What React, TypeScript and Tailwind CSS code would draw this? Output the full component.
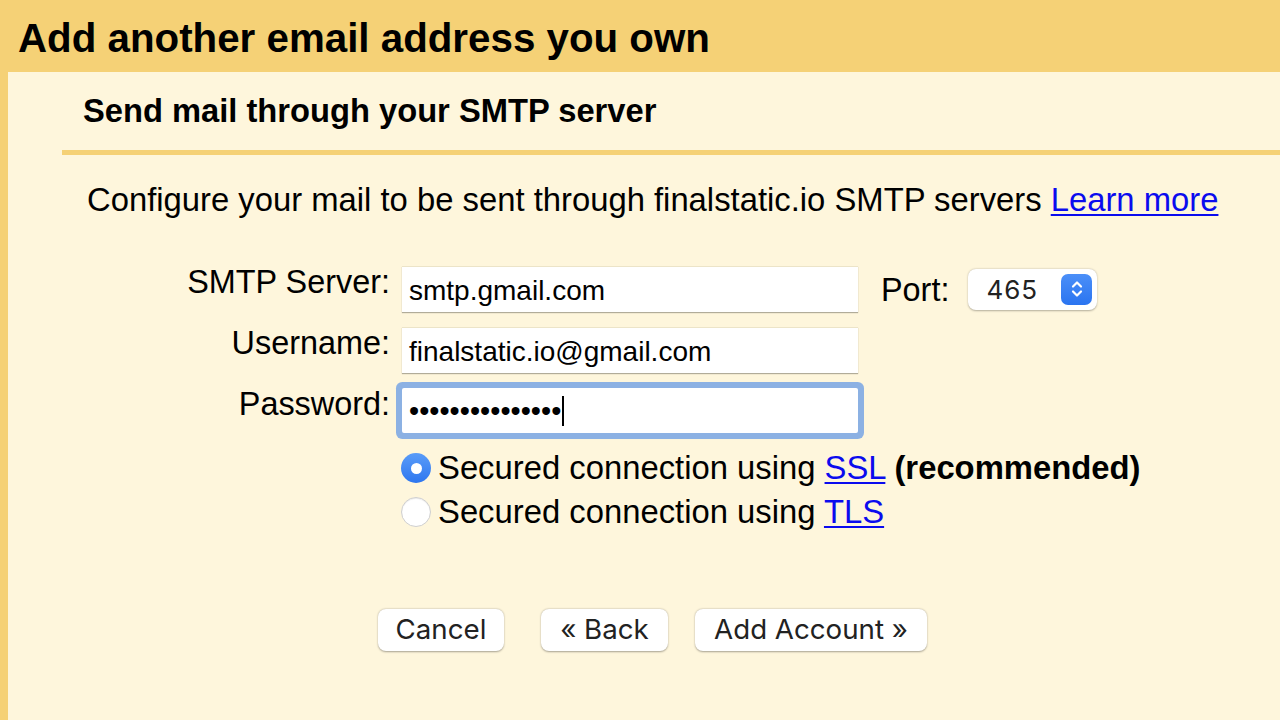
import React from "react";

function Stepper() {
  return (
    <div className="w-[31px] h-[31px] rounded-[7px] bg-gradient-to-b from-[#4b8ff8] to-[#2a74f0] flex items-center justify-center">
      <svg width="14" height="20" viewBox="0 0 14 20" fill="none">
        <path d="M3 7.5 L7 3.5 L11 7.5" stroke="white" strokeWidth="2.2" strokeLinecap="round" strokeLinejoin="round" />
        <path d="M3 12.5 L7 16.5 L11 12.5" stroke="white" strokeWidth="2.2" strokeLinecap="round" strokeLinejoin="round" />
      </svg>
    </div>
  );
}

export default function App() {
  return (
    <div className="w-[1280px] h-[720px] overflow-hidden bg-[#f5d176] flex flex-col font-['Liberation_Sans',Arial,sans-serif] text-black">
      <div className="h-[72px] shrink-0 flex items-center pl-[18px] pt-[6px] text-[40.3px] font-bold leading-none">
        Add another email address you own
      </div>
      <div className="flex-1 ml-[8px] bg-[#fef6dc] flex flex-col">
        <div className="h-[78px] flex items-center pl-[75px] text-[32.7px] font-bold leading-none">
          Send mail through your SMTP server
        </div>
        <div className="ml-[54px] h-[5px] bg-[#f5d176]" />
        <div className="mt-[26px] pl-[79px] text-[32.8px] leading-[37px] whitespace-nowrap">
          Configure your mail to be sent through finalstatic.io SMTP servers{" "}
          <span className="text-[#0b0bee] underline underline-offset-[3px] decoration-[2px]">Learn more</span>
        </div>

        <div className="mt-[43px] flex flex-col">
          <div className="h-[61px] flex items-start">
            <div className="w-[382px] pt-[3px] text-right text-[32.4px] leading-[37px]">SMTP Server:</div>
            <div className="ml-[12px] mt-[5px] w-[456px] h-[46px] bg-white border-t border-[#ece4c8] shadow-[0_1px_1px_rgba(0,0,0,0.3)] flex items-center pl-[7px] pt-[3px] text-[28px]">
              smtp.gmail.com
            </div>
            <div className="mt-[5px] h-[46px] flex items-center">
              <div className="ml-[23px] text-[32.4px] leading-none pt-[2px]">Port:</div>
              <div className="ml-[19px] w-[129px] h-[41px] rounded-[8px] bg-white shadow-[0_0.5px_2px_rgba(0,0,0,0.3)] flex items-center pl-[18px] pr-[5px]">
                <span className="font-['Inter',sans-serif] text-[26px] text-[#222] tracking-[1px]">465</span>
                <div className="ml-auto">
                  <Stepper />
                </div>
              </div>
            </div>
          </div>
          <div className="h-[61px] flex items-start">
            <div className="w-[382px] pt-[3px] text-right text-[32.4px] leading-[37px]">Username:</div>
            <div className="ml-[12px] mt-[5px] w-[456px] h-[46px] bg-white border-t border-[#ece4c8] shadow-[0_1px_1px_rgba(0,0,0,0.3)] flex items-center pl-[7px] pt-[3px] text-[28px]">
              finalstatic.io@gmail.com
            </div>
          </div>
          <div className="h-[61px] flex items-start">
            <div className="w-[382px] pt-[3px] text-right text-[32.4px] leading-[37px]">Password:</div>
            <div className="ml-[12px] mt-[5px] w-[456px] h-[45px] bg-white rounded-[2px] shadow-[0_0_0_6px_#8cb1e3] flex items-center pl-[7px] text-[29px]">
              <span className="pt-[2px]">•••••••••••••••</span>
              <span className="inline-block w-[2px] h-[30px] bg-black ml-[1px]" />
            </div>
          </div>
        </div>

        <div className="mt-[2px] pl-[393px] flex flex-col text-[32.8px]">
          <div className="h-[44px] flex items-center">
            <div className="w-[30px] h-[30px] rounded-full bg-gradient-to-b from-[#5a9cf8] to-[#2d76ef] flex items-center justify-center">
              <div className="w-[11px] h-[11px] rounded-full bg-white" />
            </div>
            <span className="ml-[7px] leading-none whitespace-nowrap">
              Secured connection using{" "}
              <span className="text-[#0b0bee] underline underline-offset-[3px] decoration-[2px]">SSL</span>{" "}
              <b>(recommended)</b>
            </span>
          </div>
          <div className="h-[44px] flex items-center">
            <div className="w-[30px] h-[30px] rounded-full bg-white border border-[#cfcfcf] shadow-[inset_0_1px_1px_rgba(0,0,0,0.08)]" />
            <span className="ml-[7px] leading-none whitespace-nowrap">
              Secured connection using{" "}
              <span className="text-[#0b0bee] underline underline-offset-[3px] decoration-[2px]">TLS</span>
            </span>
          </div>
        </div>

        <div className="mt-[75px] pl-[370px] flex items-center font-['Inter',sans-serif] text-[27.7px] text-[#222]">
          <div className="w-[126px] h-[42px] rounded-[8px] bg-white shadow-[0_0.5px_2px_rgba(0,0,0,0.35)] flex items-center justify-center">
            Cancel
          </div>
          <div className="ml-[37px] w-[127px] h-[42px] rounded-[8px] bg-white shadow-[0_0.5px_2px_rgba(0,0,0,0.35)] flex items-center justify-center">
            « Back
          </div>
          <div className="ml-[27px] w-[232px] h-[42px] rounded-[8px] bg-white shadow-[0_0.5px_2px_rgba(0,0,0,0.35)] flex items-center justify-center">
            Add Account »
          </div>
        </div>
      </div>
    </div>
  );
}
